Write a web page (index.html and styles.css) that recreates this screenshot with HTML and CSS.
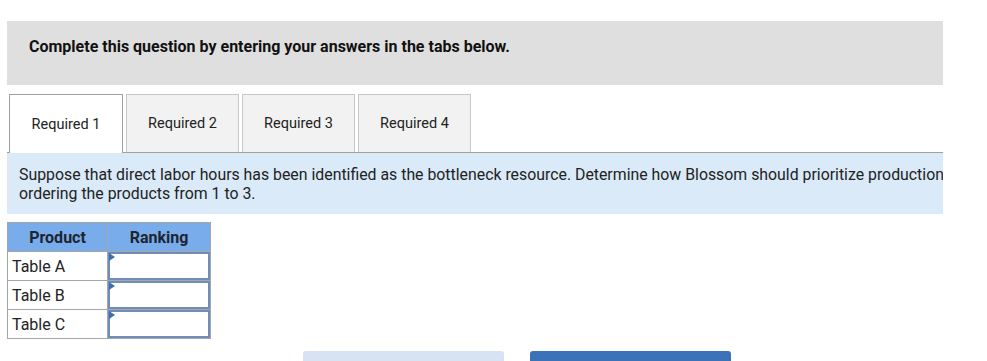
FILE: index.html
```html
<!DOCTYPE html>
<html lang="en">
    <head>
        <meta charset="utf-8" />
        <title>Required 1</title>
        <link rel="stylesheet" href="styles.css">
    </head>
    <body>
        <div class="page">
            <div class="intro">Complete this question by entering your answers in the tabs below.</div>
            <div class="tabs">
                <div class="tab tab_active">Required 1</div>
                <div class="tab">Required 2</div>
                <div class="tab">Required 3</div>
                <div class="tab">Required 4</div>
            </div>
            <div class="prompt">
                <div class="prompt_text">Suppose that direct labor hours has been identified as the bottleneck resource. Determine how Blossom should prioritize production by ordering the products from 1 to 3.</div>
            </div>
            <table class="grid">
                <tr>
                    <th>Product</th>
                    <th>Ranking</th>
                </tr>
                <tr>
                    <td class="label">Table A</td>
                    <td class="entry"><div class="box"><span class="mark"></span></div></td>
                </tr>
                <tr>
                    <td class="label">Table B</td>
                    <td class="entry"><div class="box"><span class="mark"></span></div></td>
                </tr>
                <tr>
                    <td class="label">Table C</td>
                    <td class="entry"><div class="box"><span class="mark"></span></div></td>
                </tr>
            </table>
            <div class="nav">
                <div class="btn btn_prev"></div>
                <div class="btn btn_next"></div>
            </div>
        </div>
    </body>
</html>
```

FILE: styles.css
```css
body {
    margin: 0;
    background: #fff;
    font-family: Roboto, "Liberation Sans", sans-serif;
    color: #222;
}
.page {
    width: 936px;
    margin: 21px 0 0 7px;
    overflow: hidden;
}
.intro {
    height: 64px;
    box-sizing: border-box;
    padding: 16px 22px 0;
    background: #dfdfdf;
    font-size: 16px;
    line-height: 19px;
    font-weight: bold;
    color: #111;
}
.tabs {
    display: flex;
    gap: 3px;
    margin-top: 9px;
    padding-left: 2px;
    border-bottom: 1px solid #a0a0a0;
}
.tab {
    width: 113px;
    height: 58px;
    box-sizing: border-box;
    border: 1px solid #c8c8c8;
    border-bottom: none;
    background: #f2f2f2;
    font-size: 14.5px;
    color: #222;
    display: flex;
    align-items: center;
    justify-content: center;
    margin-bottom: -1px;
}
.tab_active {
    width: 114px;
    background: #fff;
    border-color: #a0a0a0;
    height: 59px;
}
.prompt {
    background: #daeaf8;
    padding: 12px 12px 11px;
    height: 38px;
    overflow: hidden;
}
.prompt_text {
    width: 980px;
    font-size: 15.85px;
    line-height: 19px;
    color: #222;
}
.grid {
    margin-top: 8px;
    border-collapse: collapse;
    font-size: 16px;
}
.grid th {
    background: #78acea;
    height: 28px;
    padding: 0;
    border: 1px solid #a6a6a6;
    font-size: 16px;
    font-weight: bold;
    color: #1e2530;
}
.grid th:first-child {
    width: 99px;
}
.grid th:last-child {
    width: 102px;
}
.grid td {
    border: 1px solid #a6a6a6;
    height: 28px;
    padding: 0;
}
.label {
    padding-left: 4px !important;
    color: #222;
}
.box {
    height: 28px;
    box-sizing: border-box;
    border: 2px solid #6f8db6;
    background: #fff;
    position: relative;
}
.mark {
    position: absolute;
    left: -1px;
    top: -1px;
    width: 0;
    height: 0;
    border-top: 4px solid transparent;
    border-bottom: 4px solid transparent;
    border-left: 6px solid #3d6fb3;
}
.nav {
    display: flex;
    gap: 26px;
    margin-top: 12px;
    padding-left: 296px;
}
.btn {
    width: 201px;
    height: 30px;
    border-radius: 3px;
}
.btn_prev {
    background: #d7e3f2;
}
.btn_next {
    background: #3b72b8;
}
```
